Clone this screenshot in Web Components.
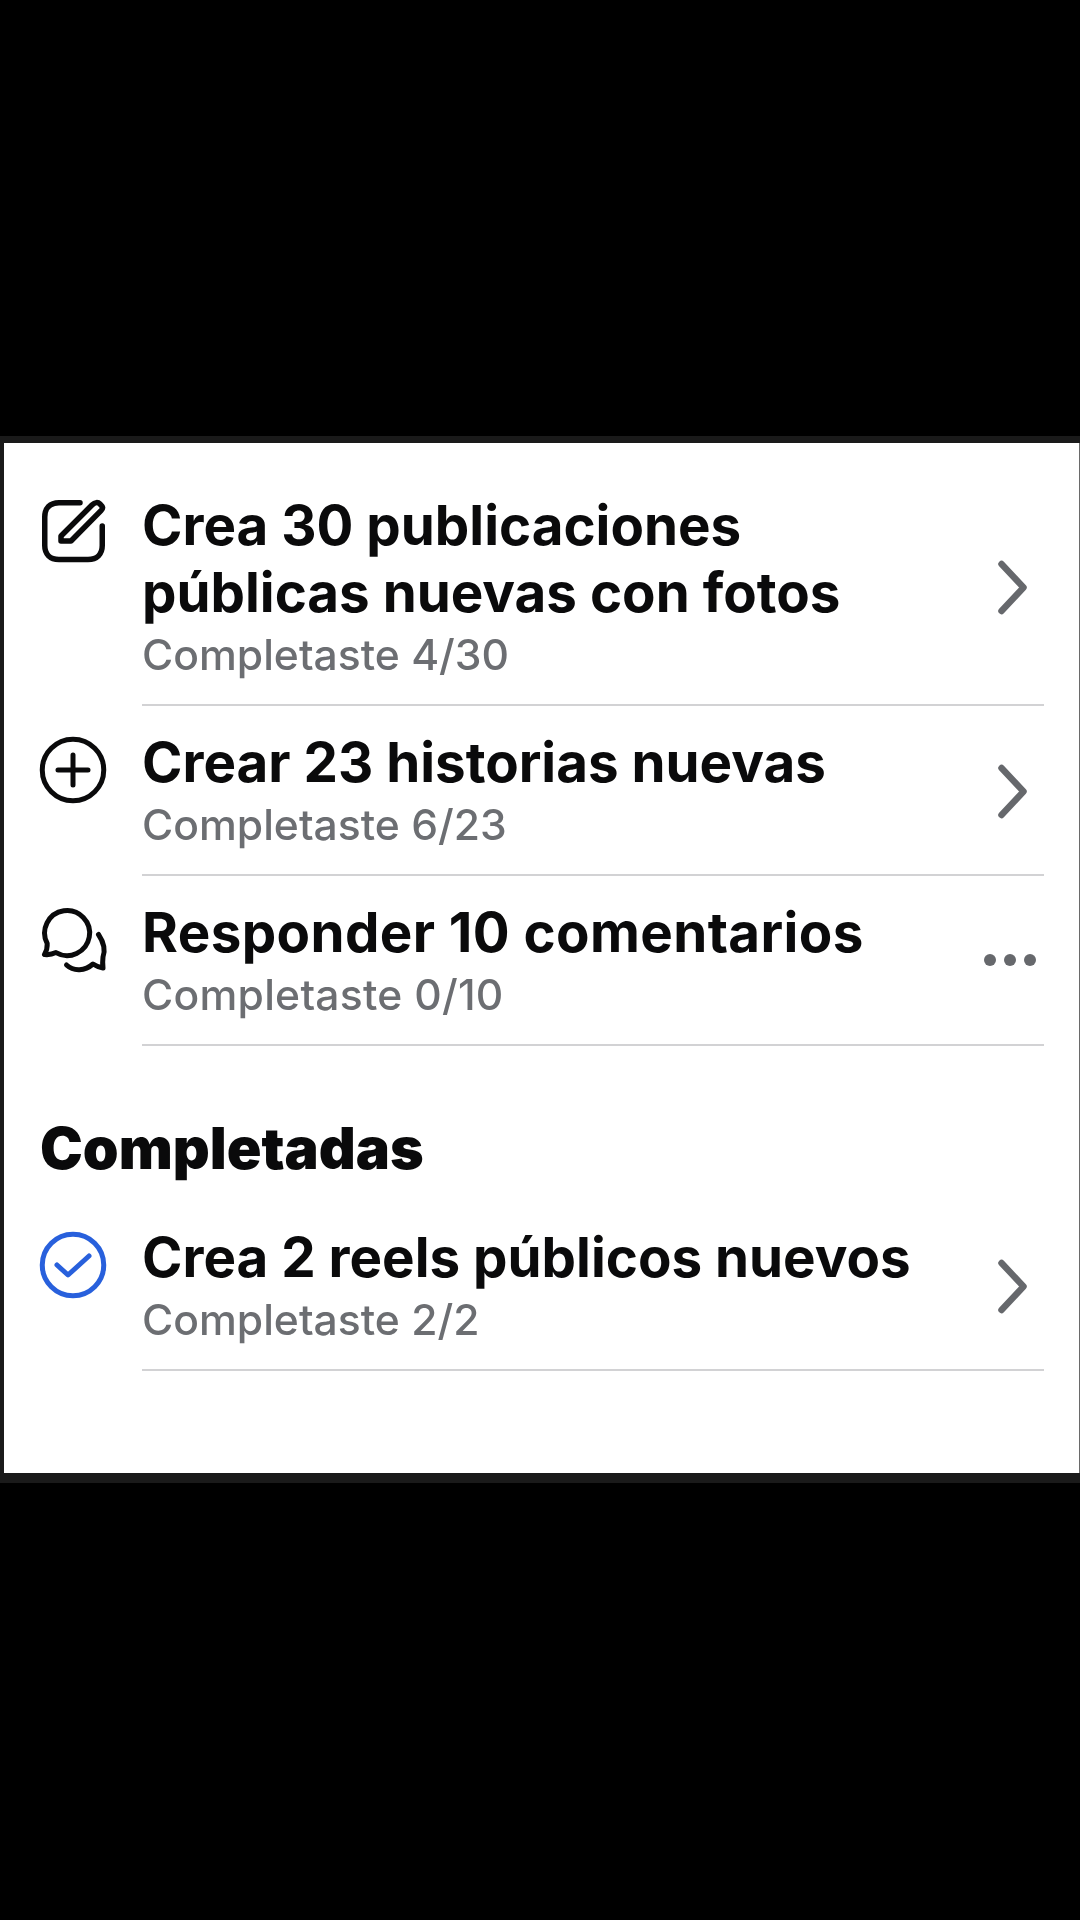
<!DOCTYPE html>
<html lang="es">
<head>
<meta charset="utf-8">
<title>Completadas</title>
<style>
    html, body { margin: 0; background: #000; }
    body { width: 1080px; height: 1920px; overflow: hidden; font-family: Inter, "Liberation Sans", sans-serif; }
    svg { overflow: visible; }
</style>
</head>
<body>
<task-panel>
    <task-row>
        <svg slot="icon" width="66" height="66" viewBox="0 0 66 66" fill="none" stroke="#0a0a0b" stroke-width="5.500" stroke-linecap="round" stroke-linejoin="round">
            <path d="M40 2.750H19C10 2.750 4.750 8 4.750 17V45.500C4.750 54 10 59.500 19 59.500H48C57 59.500 62.250 54 62.250 45.500V26"/>
            <path d="M21 41V36L52 5C55 2 58 2 60 4C63 7 63.500 8 61 10.600L31 41Z"/>
        </svg>
        <span slot="title">Crea 30 publicaciones públicas nuevas con fotos</span>
        <span slot="sub">Completaste 4/30</span>
        <row-chevron slot="end"></row-chevron>
    </task-row>
    <task-row>
        <svg slot="icon" width="66" height="66" viewBox="0 0 66 66" fill="none" stroke="#0a0a0b" stroke-width="5" stroke-linecap="round">
            <circle cx="33" cy="33" r="30.750"/>
            <path d="M33 18V48M18 33H48"/>
        </svg>
        <span slot="title">Crear 23 historias nuevas</span>
        <span slot="sub">Completaste 6/23</span>
        <row-chevron slot="end"></row-chevron>
    </task-row>
    <task-row>
        <svg slot="icon" width="66" height="66" viewBox="0 0 66 66" fill="none" stroke="#0a0a0b" stroke-width="5" stroke-linecap="round" stroke-linejoin="round">
            <path d="M16 45.600A22.500 22.500 0 1 0 7.200 36.500C7.500 41 6.500 44 4.500 47.500C9 48 13 47 16 45.600Z"/>
            <path d="M58.500 27.500C63.500 35 65.500 43 63 50C62.500 54 62.500 57 63 61C59.500 60.500 56 59 53 57C45 64 34 65 26.500 58"/>
        </svg>
        <span slot="title" style="letter-spacing: 0.4px">Responder 10 comentarios</span>
        <span slot="sub" style="letter-spacing: 0.25px">Completaste 0/10</span>
        <row-dots slot="end"></row-dots>
    </task-row>
    <section-heading>Completadas</section-heading>
    <task-row>
        <svg slot="icon" width="66" height="66" viewBox="0 0 66 66" fill="none" stroke="#2860dc" stroke-width="5" stroke-linecap="round" stroke-linejoin="round">
            <circle cx="33" cy="33" r="30.750"/>
            <path d="M17 33L28 43L49 24"/>
        </svg>
        <span slot="title">Crea 2 reels públicos nuevos</span>
        <span slot="sub">Completaste 2/2</span>
        <row-chevron slot="end"></row-chevron>
    </task-row>
</task-panel>

<script>
class TaskPanel extends HTMLElement {
    constructor() {
        super();
        this.attachShadow({ mode: 'open' });
        this.shadowRoot.innerHTML = `
            <style>
                :host {
                    display: block;
                    margin-top: 436px;
                    padding: 7px 0 10px;
                    background-color: #1a1a1a;
                }
                .sheet {
                    height: 1030px;
                    padding-top: 26px;
                    margin-left: 4px;
                    background-color: #fff;
                    border-right: 1px solid #6a6a6a;
                    box-sizing: border-box;
                    filter: blur(0.5px);
                }
            </style>
            <div class="sheet"><slot></slot></div>
        `;
    }
}

class TaskRow extends HTMLElement {
    constructor() {
        super();
        this.attachShadow({ mode: 'open' });
        this.shadowRoot.innerHTML = `
            <style>
                :host {
                    display: flex;
                    align-items: flex-start;
                    padding-left: 36px;
                }
                .icon {
                    width: 102px;
                    flex-shrink: 0;
                    padding-top: 31px;
                    height: 66px;
                }
                .body {
                    display: flex;
                    align-items: center;
                    width: 902px;
                    padding: 23px 0 20px;
                    border-bottom: 2px solid #d2d2d4;
                }
                .text {
                    flex-grow: 1;
                    min-width: 0;
                }
                .title {
                    width: 800px;
                    font-size: 54.700px;
                    line-height: 67px;
                    font-weight: 700;
                    color: #0a0a0b;
                }
                .sub {
                    font-size: 42.600px;
                    line-height: 58px;
                    font-weight: 500;
                    color: #6c6e72;
                }
                .end {
                    display: flex;
                    justify-content: flex-end;
                    flex-shrink: 0;
                }
            </style>
            <div class="icon"><slot name="icon"></slot></div>
            <div class="body">
                <div class="text">
                    <div class="title"><slot name="title"></slot></div>
                    <div class="sub"><slot name="sub"></slot></div>
                </div>
                <div class="end"><slot name="end"></slot></div>
            </div>
        `;
    }
}

class RowChevron extends HTMLElement {
    constructor() {
        super();
        this.attachShadow({ mode: 'open' });
        this.shadowRoot.innerHTML = `
            <style>
                :host { display: block; width: 46px; height: 56px; }
                svg { display: block; }
            </style>
            <svg width="32" height="56" viewBox="0 0 32 56" fill="none" stroke="#66686c" stroke-width="6.500" stroke-linecap="round" stroke-linejoin="round">
                <path d="M3.500 4L25.500 27.500L3.500 51"/>
            </svg>
        `;
    }
}

class RowDots extends HTMLElement {
    constructor() {
        super();
        this.attachShadow({ mode: 'open' });
        this.shadowRoot.innerHTML = `
            <style>
                :host {
                    display: flex;
                    gap: 8px;
                    margin: 0 8px 4px 0;
                }
                i {
                    display: block;
                    width: 12px;
                    height: 12px;
                    border-radius: 50%;
                    background-color: #66686c;
                }
            </style>
            <i></i><i></i><i></i>
        `;
    }
}

class SectionHeading extends HTMLElement {
    constructor() {
        super();
        this.attachShadow({ mode: 'open' });
        this.shadowRoot.innerHTML = `
            <style>
                :host {
                    display: block;
                    padding: 70px 0 21px 36px;
                    font-size: 57.300px;
                    line-height: 64px;
                    font-weight: 900;
                    color: #0a0a0b;
                }
            </style>
            <slot></slot>
        `;
    }
}

customElements.define('task-panel', TaskPanel);
customElements.define('task-row', TaskRow);
customElements.define('row-chevron', RowChevron);
customElements.define('row-dots', RowDots);
customElements.define('section-heading', SectionHeading);
</script>
</body>
</html>
